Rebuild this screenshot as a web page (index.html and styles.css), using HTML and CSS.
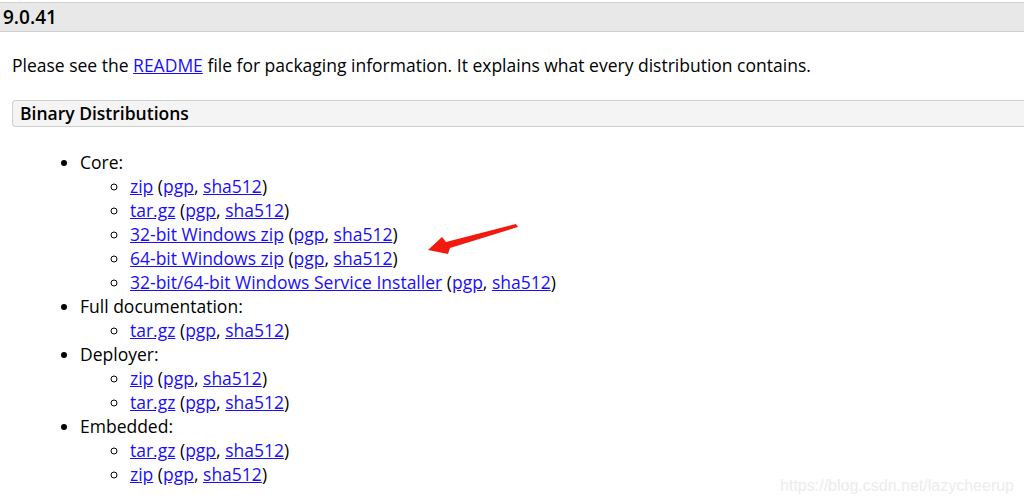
FILE: index.html
```html
<!DOCTYPE html>
<html>
<head>
<meta charset="utf-8">
<link rel="stylesheet" href="styles.css">
</head>
<body>
<h3 class="version">9.0.41</h3>
<div class="content">
  <p class="intro">Please see the <a href="#">README</a> file for packaging information. It explains what every distribution contains.</p>
  <h4 class="section">Binary Distributions</h4>
  <ul class="outer">
    <li>Core:
      <ul class="inner">
        <li><a href="#">zip</a> (<a href="#">pgp</a>, <a href="#">sha512</a>)</li>
        <li><a href="#">tar.gz</a> (<a href="#">pgp</a>, <a href="#">sha512</a>)</li>
        <li><a href="#">32-bit Windows zip</a> (<a href="#">pgp</a>, <a href="#">sha512</a>)</li>
        <li><a href="#">64-bit Windows zip</a> (<a href="#">pgp</a>, <a href="#">sha512</a>)</li>
        <li><a href="#">32-bit/64-bit Windows Service Installer</a> (<a href="#">pgp</a>, <a href="#">sha512</a>)</li>
      </ul>
    </li>
    <li>Full documentation:
      <ul class="inner">
        <li><a href="#">tar.gz</a> (<a href="#">pgp</a>, <a href="#">sha512</a>)</li>
      </ul>
    </li>
    <li>Deployer:
      <ul class="inner">
        <li><a href="#">zip</a> (<a href="#">pgp</a>, <a href="#">sha512</a>)</li>
        <li><a href="#">tar.gz</a> (<a href="#">pgp</a>, <a href="#">sha512</a>)</li>
      </ul>
    </li>
    <li>Embedded:
      <ul class="inner">
        <li><a href="#">tar.gz</a> (<a href="#">pgp</a>, <a href="#">sha512</a>)</li>
        <li><a href="#">zip</a> (<a href="#">pgp</a>, <a href="#">sha512</a>)</li>
      </ul>
    </li>
  </ul>
</div>
<svg class="arrow" width="100" height="36" viewBox="0 0 100 36">
  <path d="M0 26 L14 13 L18 18 L88 0 L90 3 L22 24 L20 30 Z" fill="#f21a0e"/>
</svg>
<div class="watermark">https://blog.csdn.net/lazycheerup</div>
</body>
</html>
```
FILE: styles.css
```css
html, body {
  margin: 0;
  padding: 0;
  background: #fff;
}
body {
  font-family: "Open Sans", "Noto Sans", sans-serif;
  font-size: 17.5px;
  color: #000;
  position: relative;
  width: 1024px;
  height: 504px;
  overflow: hidden;
}
.version {
  margin: 2px 0 0 0;
  padding: 0 3px;
  height: 28px;
  line-height: 28px;
  font-size: 19px;
  font-weight: 600;
  background: #e8e8e8;
  border-top: 1px solid #cfcfcf;
  border-bottom: 1px solid #cfcfcf;
}
.content {
  padding: 0 0 0 12px;
}
.intro {
  margin: 0 0 23px 0;
  padding-top: 21px;
  line-height: 24px;
}
.content a {
  color: #1a0dff;
  text-decoration: underline;
}
.section {
  margin: 0;
  height: 25px;
  line-height: 25px;
  padding-left: 7px;
  font-size: 17.5px;
  font-weight: 600;
  background: #f4f4f4;
  border: 1px solid #cfcfcf;
  border-right: none;
  border-radius: 4px 0 0 4px;
}
.outer {
  margin: 23px 0 0 0;
  padding-left: 68px;
  list-style: disc;
  line-height: 24px;
}
.inner {
  margin: 0;
  padding-left: 50px;
  list-style: circle;
}
.arrow {
  position: absolute;
  left: 428px;
  top: 224px;
}
.watermark {
  position: absolute;
  right: 10px;
  top: 477px;
  font-family: "Liberation Sans", Arial, sans-serif;
  font-size: 16px;
  color: #ececec;
}
```
